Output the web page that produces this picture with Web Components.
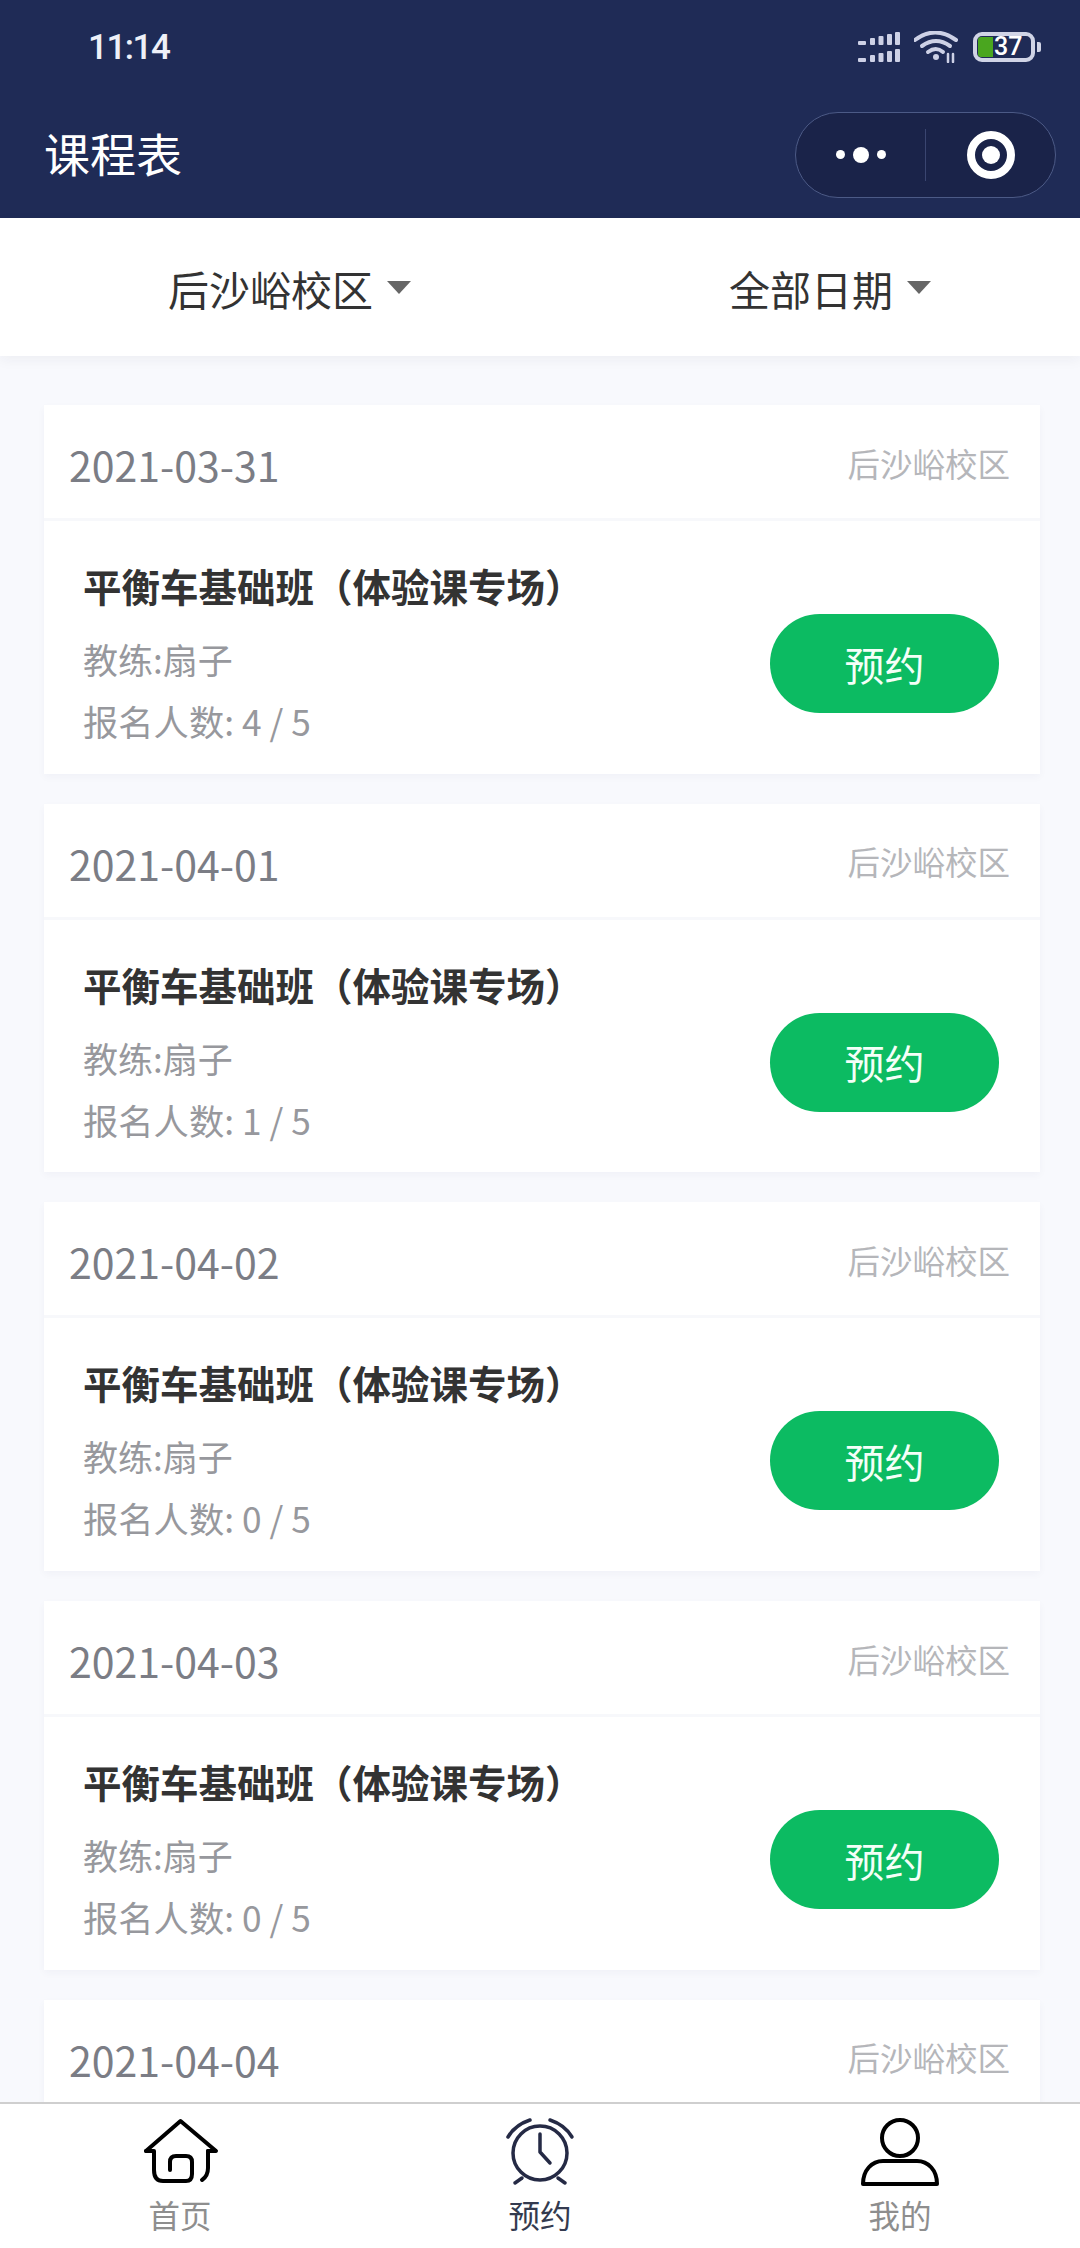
<!DOCTYPE html>
<html lang="zh">
<head>
<meta charset="utf-8">
<title>课程表</title>
<style>
  html, body { margin: 0; padding: 0; }
  body {
    width: 1080px;
    height: 2248px;
    overflow: hidden;
    font-family: "Noto Sans CJK SC", "Noto Sans", sans-serif;
    background: #f8f9fd;
  }
</style>
</head>
<body>
<schedule-page>
  <status-bar slot="status" time="11:14" battery="37"></status-bar>
  <nav-bar slot="nav">课程表</nav-bar>
  <filter-bar slot="filter">
    <filter-option>后沙峪校区</filter-option>
    <filter-option>全部日期</filter-option>
  </filter-bar>

  <course-card>
    <span slot="date">2021-03-31</span>
    <span slot="campus">后沙峪校区</span>
    <span slot="title">平衡车基础班（体验课专场）</span>
    <span slot="coach">教练:扇子</span>
    <span slot="count">报名人数: 4 / 5</span>
    <book-button slot="action">预约</book-button>
  </course-card>
  <course-card>
    <span slot="date">2021-04-01</span>
    <span slot="campus">后沙峪校区</span>
    <span slot="title">平衡车基础班（体验课专场）</span>
    <span slot="coach">教练:扇子</span>
    <span slot="count">报名人数: 1 / 5</span>
    <book-button slot="action">预约</book-button>
  </course-card>
  <course-card>
    <span slot="date">2021-04-02</span>
    <span slot="campus">后沙峪校区</span>
    <span slot="title">平衡车基础班（体验课专场）</span>
    <span slot="coach">教练:扇子</span>
    <span slot="count">报名人数: 0 / 5</span>
    <book-button slot="action">预约</book-button>
  </course-card>
  <course-card>
    <span slot="date">2021-04-03</span>
    <span slot="campus">后沙峪校区</span>
    <span slot="title">平衡车基础班（体验课专场）</span>
    <span slot="coach">教练:扇子</span>
    <span slot="count">报名人数: 0 / 5</span>
    <book-button slot="action">预约</book-button>
  </course-card>
  <!-- Fifth card is cut off by the tab bar, only its head shows -->
  <course-card>
    <span slot="date">2021-04-04</span>
    <span slot="campus">后沙峪校区</span>
  </course-card>

  <tab-bar slot="tabs">
    <tab-item>
      <svg slot="icon" width="100" height="72" viewBox="0 0 100 72" fill="none" stroke="#000" stroke-width="4" stroke-linecap="round" stroke-linejoin="round">
        <path d="M16 35 L50.500 5 L86 35 H78"/>
        <path d="M16 35 H24 V54 Q24 65 33 65 H56 Q62 65 62 58 V46 Q62 40 56 40 H46 Q40 40 40 46 V54"/>
        <path d="M78 35 V52 Q78 60 72 64"/>
      </svg>
      首页
    </tab-item>
    <tab-item active>
      <svg slot="icon" width="100" height="72" viewBox="0 0 100 72" fill="none" stroke="#252a45" stroke-width="3.500" stroke-linecap="round" stroke-linejoin="round">
        <circle cx="50" cy="37" r="27"/>
        <path d="M50 18 V36 L60 47"/>
        <path d="M18 21 Q25 9 40 4"/>
        <path d="M60 4 Q75 9 82 21"/>
        <path d="M25 67 L32 62"/>
        <path d="M68 62 L75 67"/>
      </svg>
      预约
    </tab-item>
    <tab-item>
      <svg slot="icon" width="100" height="72" viewBox="0 0 100 72" fill="none" stroke="#000" stroke-width="4" stroke-linejoin="round">
        <circle cx="50" cy="22" r="18"/>
        <path d="M13 68 C13 54 22 45 33 45 H67 C78 45 87 54 87 68 Z"/>
      </svg>
      我的
    </tab-item>
  </tab-bar>
</schedule-page>

<script>
class SchedulePage extends HTMLElement {
  constructor() {
    super();
    this.attachShadow({ mode: 'open' });
  }

  connectedCallback() {
    this.shadowRoot.innerHTML = `
      <style>
        :host {
          display: flex;
          flex-direction: column;
          width: 1080px;
          height: 2248px;
          overflow: hidden;
        }
        header { background: #1f2b56; }
        .list {
          flex: 1;
          min-height: 0;
          overflow: hidden;
          padding: 49px 40px 0 44px;
        }
      </style>
      <header>
        <slot name="status"></slot>
        <slot name="nav"></slot>
      </header>
      <slot name="filter"></slot>
      <div class="list"><slot></slot></div>
      <slot name="tabs"></slot>
    `;
  }
}

class StatusBar extends HTMLElement {
  constructor() {
    super();
    this.attachShadow({ mode: 'open' });
  }

  connectedCallback() {
    const bars = (bottom) => [[0, 8, 4], [12, 5, 7], [20.500, 5, 9], [29, 5, 11], [37, 5, 13]]
      .map(([x, w, h]) => `<rect x="${x}" y="${bottom - h}" width="${w}" height="${h}" rx="1"/>`)
      .join('');

    this.shadowRoot.innerHTML = `
      <style>
        :host {
          display: flex;
          align-items: center;
          height: 88px;
          padding: 3px 39px 0 88px;
          color: #eef0f8;
        }
        .time {
          flex: 1;
          font: 500 35px/1 Roboto, sans-serif;
          letter-spacing: -1.500px;
        }
        .icons { display: flex; align-items: center; }
        svg { display: block; }
        .wifi { margin-left: 14px; }
        .battery {
          position: relative;
          box-sizing: border-box;
          width: 62px;
          height: 30px;
          margin-left: 15px;
          border: 4px solid #d0d4e6;
          border-radius: 9px;
          font: 500 25px/22px Roboto, sans-serif;
          color: #fff;
          padding-left: 17px;
        }
        .battery i {
          position: absolute;
          left: 1px;
          top: 1px;
          width: 15px;
          height: 20px;
          border-radius: 3px 0 0 3px;
          background: #4aa61f;
        }
        .tip {
          width: 4px;
          height: 10px;
          margin-left: 2px;
          border-radius: 0 2px 2px 0;
          background: #d0d4e6;
        }
      </style>
      <span class="time">${this.getAttribute('time')}</span>
      <div class="icons">
        <svg width="42" height="32" viewBox="0 0 42 32" fill="#cdd1e6">${bars(14)}${bars(31)}</svg>
        <svg class="wifi" width="44" height="32" viewBox="0 0 44 32" fill="none" stroke="#cdd1e6" stroke-width="4" stroke-linecap="round">
          <path d="M2 9 Q22 -6 43 9" transform="translate(-1 0)"/>
          <path d="M8 15 Q22 5 36 15"/>
          <path d="M14 21 Q22 15 29 21"/>
          <circle cx="22" cy="26" r="3" fill="#cdd1e6" stroke="none"/>
          <path d="M34 23 V31 M39 23 V31" stroke-width="2.500"/>
        </svg>
        <div class="battery"><i></i><span style="position:relative">${this.getAttribute('battery')}</span></div>
        <div class="tip"></div>
      </div>
    `;
  }
}

// Title on the left, WeChat mini program capsule on the right
class NavBar extends HTMLElement {
  constructor() {
    super();
    this.attachShadow({ mode: 'open' });
  }

  connectedCallback() {
    this.shadowRoot.innerHTML = `
      <style>
        :host {
          display: flex;
          align-items: center;
          justify-content: space-between;
          height: 127px;
          padding: 0 24px 0 44px;
          color: #fff;
        }
        .title { font-size: 46px; line-height: 60px; margin-top: -5px; }
        .capsule {
          box-sizing: border-box;
          display: flex;
          align-items: center;
          width: 261px;
          height: 86px;
          border: 1px solid #4c5a86;
          border-radius: 43px;
          background: #1a2349;
        }
        .cell {
          flex: 1;
          display: flex;
          align-items: center;
          justify-content: center;
          gap: 8px;
        }
        .divider { width: 1px; height: 52px; background: #3a4570; }
        .dot { width: 9px; height: 9px; border-radius: 50%; background: #fff; }
        .dot.big { width: 16px; height: 16px; }
        .ring {
          box-sizing: border-box;
          display: flex;
          align-items: center;
          justify-content: center;
          width: 48px;
          height: 48px;
          border: 8px solid #fff;
          border-radius: 50%;
        }
        .ring i { width: 18px; height: 18px; border-radius: 50%; background: #fff; }
      </style>
      <span class="title"><slot></slot></span>
      <div class="capsule">
        <div class="cell"><span class="dot"></span><span class="dot big"></span><span class="dot"></span></div>
        <div class="divider"></div>
        <div class="cell"><span class="ring"><i></i></span></div>
      </div>
    `;
  }
}

class FilterBar extends HTMLElement {
  constructor() {
    super();
    this.attachShadow({ mode: 'open' });
  }

  connectedCallback() {
    this.shadowRoot.innerHTML = `
      <style>
        :host {
          display: flex;
          align-items: center;
          justify-content: space-between;
          position: relative;
          height: 138px;
          padding: 0 149px 0 168px;
          background: #fff;
          box-shadow: 0 4px 12px rgba(30, 30, 60, 0.05);
        }
      </style>
      <slot></slot>
    `;
  }
}

class FilterOption extends HTMLElement {
  constructor() {
    super();
    this.attachShadow({ mode: 'open' });
  }

  connectedCallback() {
    this.shadowRoot.innerHTML = `
      <style>
        :host {
          display: flex;
          align-items: center;
          gap: 14px;
          margin-top: 1px;
          font-size: 41px;
          line-height: 60px;
          color: #333;
        }
        .caret {
          width: 0;
          height: 0;
          border-left: 12.500px solid transparent;
          border-right: 12.500px solid transparent;
          border-top: 13px solid #666;
        }
      </style>
      <slot></slot><span class="caret"></span>
    `;
  }
}

class CourseCard extends HTMLElement {
  constructor() {
    super();
    this.attachShadow({ mode: 'open' });
  }

  connectedCallback() {
    this.shadowRoot.innerHTML = `
      <style>
        :host {
          display: block;
          box-sizing: border-box;
          height: 368.700px;
          margin-bottom: 30px;
          background: #fff;
          box-shadow: 0 3px 8px rgba(30, 30, 80, 0.035);
        }
        .head {
          display: flex;
          align-items: center;
          justify-content: space-between;
          box-sizing: border-box;
          height: 116px;
          padding: 0 30px 0 25px;
          border-bottom: 3px solid #f7f8fb;
        }
        .date { font-size: 41px; line-height: 60px; margin-top: 5px; color: #7b7d85; }
        .campus { font-size: 32.500px; line-height: 50px; margin-top: 2px; color: #b5b6ba; }
        .body {
          display: flex;
          justify-content: space-between;
          padding: 39px 41px 0 39px;
        }
        .title { display: block; font-size: 38.500px; line-height: 50px; font-weight: 700; color: #333; }
        .coach { display: block; margin-top: 24px; font-size: 35px; line-height: 50px; color: #97989d; }
        .count { display: block; margin-top: 12px; font-size: 35.300px; line-height: 50px; color: #97989d; }
        ::slotted(book-button) { margin-top: 54px; }
      </style>
      <div class="head">
        <span class="date"><slot name="date"></slot></span>
        <span class="campus"><slot name="campus"></slot></span>
      </div>
      <div class="body">
        <div>
          <span class="title"><slot name="title"></slot></span>
          <span class="coach"><slot name="coach"></slot></span>
          <span class="count"><slot name="count"></slot></span>
        </div>
        <slot name="action"></slot>
      </div>
    `;
  }
}

class BookButton extends HTMLElement {
  constructor() {
    super();
    this.attachShadow({ mode: 'open' });
  }

  connectedCallback() {
    this.shadowRoot.innerHTML = `
      <style>
        :host {
          display: flex;
          align-items: center;
          justify-content: center;
          width: 229px;
          height: 99px;
          border-radius: 50px;
          background: #0cbb62;
          color: #f4fff8;
          font-size: 40px;
          cursor: pointer;
        }
      </style>
      <slot></slot>
    `;
  }
}

class TabBar extends HTMLElement {
  constructor() {
    super();
    this.attachShadow({ mode: 'open' });
  }

  connectedCallback() {
    this.shadowRoot.innerHTML = `
      <style>
        :host {
          display: grid;
          grid-template-columns: repeat(3, 1fr);
          position: relative;
          box-sizing: border-box;
          height: 146px;
          border-top: 2px solid #cfcfcf;
          background: #fff;
        }
      </style>
      <slot></slot>
    `;
  }
}

class TabItem extends HTMLElement {
  constructor() {
    super();
    this.attachShadow({ mode: 'open' });
  }

  connectedCallback() {
    const color = this.hasAttribute('active') ? '#333a4f' : '#8e8e8e';
    this.shadowRoot.innerHTML = `
      <style>
        :host {
          display: flex;
          flex-direction: column;
          align-items: center;
          padding-top: 12px;
          font-size: 31.500px;
          line-height: 44px;
          color: ${color};
          cursor: pointer;
        }
        .label { margin-top: 4px; }
      </style>
      <slot name="icon"></slot>
      <span class="label"><slot></slot></span>
    `;
  }
}

customElements.define('schedule-page', SchedulePage);
customElements.define('status-bar', StatusBar);
customElements.define('nav-bar', NavBar);
customElements.define('filter-bar', FilterBar);
customElements.define('filter-option', FilterOption);
customElements.define('course-card', CourseCard);
customElements.define('book-button', BookButton);
customElements.define('tab-bar', TabBar);
customElements.define('tab-item', TabItem);
</script>
</body>
</html>
